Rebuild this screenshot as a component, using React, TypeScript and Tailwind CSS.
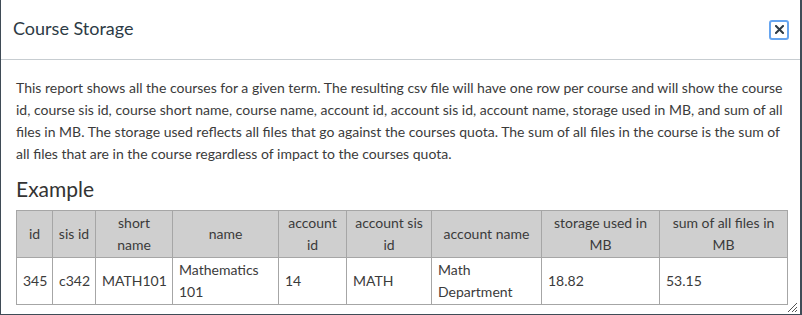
import React from "react";

const cols = [36, 43, 77, 106, 68, 85, 110, 118, 128];
const heads = ["id", "sis id", "short name", "name", "account id", "account sis id", "account name", "storage used in MB", "sum of all files in MB"];
const row = ["345", "c342", "MATH101", "Mathematics 101", "14", "MATH", "Math Department", "18.82", "53.15"];

export default function App() {
  return (
    <div
      className="relative w-[802px] h-[315px] bg-white border-l border-r-2 border-b border-[#3f4b56] text-[#2d3b45] overflow-hidden"
      style={{ fontFamily: "Lato, 'Open Sans', sans-serif" }}
    >
      <div className="h-[60px] border-b border-[#c7cdd1] flex items-center justify-between pl-[12px] pr-[11px]">
        <h1 className="text-[18px] leading-[22px] font-normal mt-[-4px]">Course Storage</h1>
        <button className="w-[20px] h-[20px] rounded-[3px] border-2 border-[#66a5f0] flex items-center justify-center bg-white mt-[0px]">
          <svg width="9" height="9" viewBox="0 0 9 9">
            <path d="M1 1 L8 8 M8 1 L1 8" stroke="#2d3b45" strokeWidth="2" strokeLinecap="square" />
          </svg>
        </button>
      </div>
      <div className="pl-[15px] pr-[14px] pt-[17px]">
        <p className="text-[14px] leading-[22px] text-[#3b3b3b]">
          This report shows all the courses for a given term. The resulting csv file will have one row per course and will show the course id, course sis id, course short name, course name, account id, account sis id, account name, storage used in MB, and sum of all files in MB. The storage used reflects all files that go against the courses quota. The sum of all files in the course is the sum of all files that are in the course regardless of impact to the courses quota.
        </p>
        <h2 className="text-[21px] leading-[26px] mt-[11px] mb-[8px] text-[#333]">Example</h2>
        <table className="table-fixed border-collapse text-[14px] leading-[22px] text-[#3b3b3b]" style={{ width: 771 }}>
          <colgroup>
            {cols.map((w, i) => (
              <col key={i} style={{ width: w }} />
            ))}
          </colgroup>
          <thead>
            <tr>
              {heads.map((h, i) => (
                <th key={i} className="bg-[#cfcfcf] border border-[#a6a6a6] font-normal text-center px-[5px] py-px h-[47px] align-middle">
                  {h}
                </th>
              ))}
            </tr>
          </thead>
          <tbody>
            <tr>
              {row.map((c, i) => (
                <td key={i} className="border border-[#a6a6a6] text-left px-[6px] py-px h-[47px] align-middle">
                  {c}
                </td>
              ))}
            </tr>
          </tbody>
        </table>
      </div>
      <svg className="absolute right-[2px] bottom-[1px]" width="12" height="12" viewBox="0 0 12 12">
        <path d="M11 2 L2 11 M11 6 L6 11 M11 9 L9 11" stroke="#555" strokeWidth="1" />
      </svg>
    </div>
  );
}
